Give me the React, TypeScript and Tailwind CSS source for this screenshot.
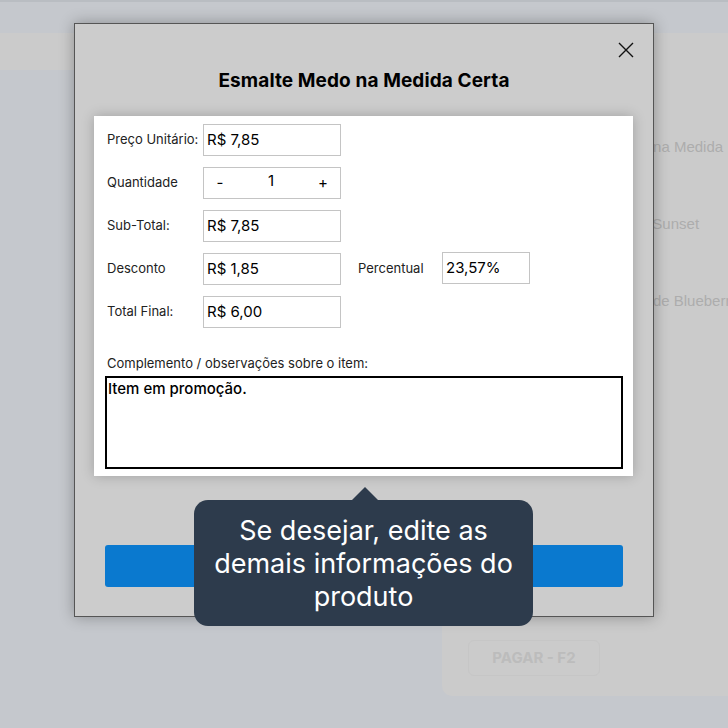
import React from "react";

type Row = { label: string; value: string };

const rows: Row[] = [
  { label: "Preço Unitário:", value: "R$ 7,85" },
  { label: "Quantidade", value: "" },
  { label: "Sub-Total:", value: "R$ 7,85" },
  { label: "Desconto", value: "R$ 1,85" },
  { label: "Total Final:", value: "R$ 6,00" },
];

function Field({ value }: { value: string }) {
  return (
    <div className="w-[138px] h-[32px] border border-[#c4c4c4] bg-white flex items-center pl-[3px] text-[15px] text-black">
      {value}
    </div>
  );
}

function QuantityField() {
  return (
    <div className="w-[138px] h-[32px] border border-[#c4c4c4] bg-white flex items-center text-[15px] text-black">
      <span className="w-[32px] text-center">-</span>
      <span className="flex-1 text-center pb-[3px]">1</span>
      <span className="w-[34px] text-center">+</span>
    </div>
  );
}

function Background() {
  return (
    <div className="flex flex-col h-full">
      <div className="h-[2px] bg-[#b9bdc2]" />
      <div className="h-[31px]" />
      <div className="h-[37px] bg-[#cbcbcb]" />
      <div className="flex flex-1">
        <div className="flex-1" />
        <div className="w-[286px] h-[626px] bg-[#cbcbcb] rounded-bl-[10px] flex flex-col font-['Liberation_Sans',Arial,sans-serif] text-[15px] text-[#adadad]">
          <div className="pt-[66px] flex flex-col gap-[55px] whitespace-nowrap">
            <div className="h-[22px] leading-[22px] pl-[111px]">Esmalte Medo na Medida</div>
            <div className="h-[22px] leading-[22px] pl-[152px]">Esmalte Sunset</div>
            <div className="h-[22px] leading-[22px] pl-[105px] w-[286px] overflow-hidden">Esmalte Geleia de Blueberry</div>
          </div>
          <div className="flex-1" />
          <div className="pl-[26px] pb-[20px]">
            <div className="w-[132px] h-[36px] border border-[#c6c6c6] rounded-md flex items-center justify-center font-['Inter',sans-serif] font-bold text-[15px] text-[#bcbcbc]">
              PAGAR - F2
            </div>
          </div>
        </div>
      </div>
    </div>
  );
}

export default function App() {
  return (
    <div className="relative w-[728px] h-[728px] overflow-hidden bg-[#c5c8cd] font-['Inter',sans-serif]">
      <Background />

      {/* item editor dialog */}
      <div className="absolute left-[74px] top-[23px] w-[580px] h-[594px] bg-[#cccccc] border border-[#555555] shadow-[0_0_14px_rgba(0,0,0,0.3)] flex flex-col">
        <div className="relative h-[92px] pt-[46px] text-center">
          <h1 className="text-[19px] leading-[22px] font-bold text-black tracking-[0.1px]">
            Esmalte Medo na Medida Certa
          </h1>
          <button className="absolute right-[19px] top-[18px] w-[16px] h-[16px]">
            <svg width="16" height="16" viewBox="0 0 16 16">
              <path d="M1 1 L15 15 M15 1 L1 15" stroke="#111" strokeWidth="1.4" fill="none" />
            </svg>
          </button>
        </div>

        <div className="ml-[19px] w-[539px] h-[360px] bg-white shadow-[0_0_12px_rgba(0,0,0,0.22)] pt-[8px] pl-[13px] flex flex-col">
          <div className="flex flex-col gap-[11px]">
            {rows.map((r) => (
              <div key={r.label} className="flex items-center h-[32px]">
                <span className="w-[96px] text-[13px] text-[#222]">{r.label}</span>
                {r.label === "Quantidade" ? <QuantityField /> : <Field value={r.value} />}
                {r.label === "Desconto" && (
                  <>
                    <span className="ml-[17px] w-[84px] text-[13px] text-[#222]">Percentual</span>
                    <div className="w-[88px] h-[32px] border border-[#c4c4c4] flex items-center pl-[3px] text-[15px] text-black -mt-[2px]">
                      23,57%
                    </div>
                  </>
                )}
              </div>
            ))}
          </div>
          <div className="mt-[27px] text-[13px] leading-[16px] text-[#222]">
            Complemento / observações sobre o item:
          </div>
          <div className="mt-[5px] -ml-[2px] w-[518px] h-[93px] border-2 border-black pt-[2px] pl-[1px] text-[15px] leading-[18px] font-medium text-black">
            Item em promoção.
          </div>
        </div>

        <button className="mt-[69px] ml-[30px] w-[518px] h-[42px] rounded-[3px] bg-[#0a79cf]" />
      </div>

      {/* onboarding hint */}
      <div className="absolute left-[194px] top-[500px] w-[339px] h-[126px] bg-[#2d3b4c] rounded-[14px] pt-[14px] text-center text-white text-[27px] leading-[33px]">
        <svg className="absolute left-[157px] -top-[13px]" width="28" height="14" viewBox="0 0 28 14">
          <path d="M0 14 L14 0 L28 14 Z" fill="#2d3b4c" />
        </svg>
        Se desejar, edite as
        <br />
        demais informações do
        <br />
        produto
      </div>
    </div>
  );
}
